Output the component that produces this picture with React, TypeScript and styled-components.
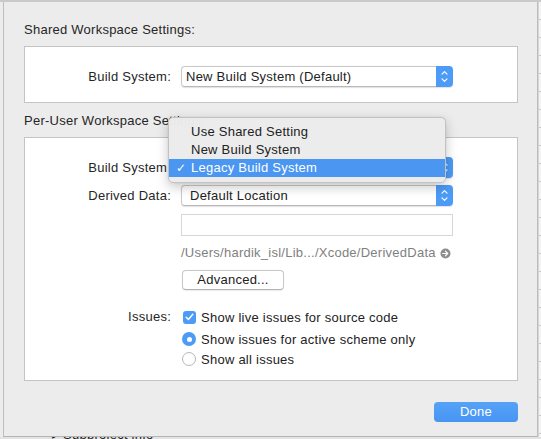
import React from "react";
import styled, { createGlobalStyle } from "styled-components";

const Global = createGlobalStyle`
  html, body { margin: 0; padding: 0; background: #e4e4e4; }
  #root { width: 541px; height: 439px; overflow: hidden; }
  * { box-sizing: border-box; }
`;

const BLUE = "#4c9bf6";
const FONT = `"Liberation Sans", Arial, sans-serif`;

const Screen = styled.div`
  width: 541px;
  height: 439px;
  display: grid;
  grid-template-rows: 2px 435px 2px;
  font-family: ${FONT};
  font-size: 13px;
  letter-spacing: 0.25px;
  color: #222;
  overflow: hidden;
`;

const TopEdge = styled.div`
  background: #c9c9c9;
`;

const Middle = styled.div`
  display: flex;
  align-items: stretch;
  height: 435px;
  overflow: hidden;
`;

const SideBackdrop = styled.div<{ $w: number }>`
  width: ${(p) => p.$w}px;
  flex: none;
  background: #ececec;
`;

const RightBackdrop = styled.div`
  flex: 1;
  background: repeating-linear-gradient(
    to bottom,
    #f3f3f3 0px,
    #f3f3f3 17px,
    #c9c9c9 17px,
    #c9c9c9 18px
  );
  border-left: 1px solid #d6d6d6;
`;

const BottomBackdrop = styled.div`
  height: 2px;
  background: #e3e3e3;
  overflow: hidden;
`;

const BehindText = styled.div`
  padding-left: 52px;
  line-height: 13px;
  height: 13px;
  transform: translateY(-9px);
  font-size: 13px;
  color: #222;
  white-space: nowrap;
`;

const Sheet = styled.div`
  position: relative;
  width: 535px;
  height: 435px;
  flex: none;
  background: #ececec;
  border-left: 1px solid #bdbdbd;
  border-right: 1px solid #bdbdbd;
  border-bottom: 1px solid #b4b4b4;
  padding: 20px 19px 0 20px;
  display: flex;
  flex-direction: column;
`;

const SectionTitle = styled.div<{ $mt: number }>`
  margin-top: ${(p) => p.$mt}px;
  line-height: 16px;
  height: 16px;
  color: #262626;
`;

const GroupBox = styled.div<{ $pt: number; $pb: number }>`
  margin-top: 8px;
  background: #ffffff;
  border: 1px solid #c4c4c4;
  padding: ${(p) => p.$pt}px 0 ${(p) => p.$pb}px 0;
  display: flex;
  flex-direction: column;
`;

const FormRow = styled.div<{ $mt?: number }>`
  display: grid;
  grid-template-columns: 146px 1fr;
  column-gap: 10px;
  align-items: center;
  margin-top: ${(p) => p.$mt ?? 0}px;
`;

const Label = styled.div<{ $lh?: number }>`
  text-align: right;
  line-height: ${(p) => p.$lh ?? 16}px;
  color: #262626;
  white-space: nowrap;
`;

const TopLabel = styled(Label)`
  align-self: start;
`;

const Popup = styled.div`
  display: flex;
  width: 272px;
  height: 21px;
  border-radius: 4px;
  box-shadow: 0 0.5px 1px rgba(0, 0, 0, 0.12);
`;

const PopupValue = styled.div<{ $inset: number }>`
  flex: 1;
  border: 1px solid #c9c9c9;
  border-right: none;
  border-bottom-color: #b9b9b9;
  border-radius: 4px 0 0 4px;
  background: #fff;
  padding-left: ${(p) => p.$inset}px;
  line-height: 19px;
  color: #222;
  white-space: nowrap;
  overflow: hidden;
`;

const PopupArrows = styled.div`
  width: 17px;
  flex: none;
  background: ${BLUE};
  border-radius: 0 4px 4px 0;
  display: flex;
  align-items: center;
  justify-content: center;
`;

const TextField = styled.div`
  width: 272px;
  height: 22px;
  border: 1px solid #d6d6d6;
  background: #fff;
`;

const PathLine = styled.div`
  display: flex;
  align-items: center;
  gap: 4px;
  line-height: 16px;
  color: #7f7f7f;
  white-space: nowrap;
`;

const PushButton = styled.button`
  width: 102px;
  height: 20px;
  margin-left: 1px;
  padding: 0;
  border: 1px solid #c8c8c8;
  border-bottom-color: #b2b2b2;
  border-radius: 4px;
  background: #fff;
  font-family: ${FONT};
  font-size: 13px;
  letter-spacing: 0.25px;
  color: #222;
  line-height: 18px;
  box-shadow: 0 0.5px 1px rgba(0, 0, 0, 0.08);
`;

const OptionList = styled.div`
  display: flex;
  flex-direction: column;
`;

const Option = styled.div<{ $mb?: number }>`
  display: flex;
  align-items: center;
  gap: 5px;
  height: 20px;
  margin-bottom: ${(p) => p.$mb ?? 0}px;
  color: #222;
  white-space: nowrap;
`;

const CheckBox = styled.div`
  width: 13px;
  height: 13px;
  margin-left: 2px;
  border-radius: 3px;
  background: ${BLUE};
  display: flex;
  align-items: center;
  justify-content: center;
`;

const Radio = styled.div<{ $on: boolean }>`
  width: 14px;
  height: 14px;
  margin-left: 1px;
  border-radius: 50%;
  background: ${(p) => (p.$on ? BLUE : "#fff")};
  border: ${(p) => (p.$on ? "none" : "1px solid #b7b7b7")};
  display: flex;
  align-items: center;
  justify-content: center;
  &::after {
    content: "";
    display: ${(p) => (p.$on ? "block" : "none")};
    width: 5px;
    height: 5px;
    border-radius: 50%;
    background: #fff;
  }
`;

const Footer = styled.div`
  margin-top: 21px;
  display: flex;
  justify-content: flex-end;
`;

const DefaultButton = styled.button`
  width: 84px;
  height: 20px;
  padding: 0;
  border: none;
  border-radius: 4px;
  background: linear-gradient(#55a2f7, #4795f3);
  color: #fff;
  font-family: ${FONT};
  font-size: 13px;
  letter-spacing: 0.25px;
  line-height: 20px;
`;

const Menu = styled.div`
  position: absolute;
  left: 164px;
  top: 115px;
  width: 278px;
  padding: 5px 0;
  background: rgba(236, 236, 236, 0.98);
  border: 0.5px solid #c2c2c2;
  border-radius: 5px;
  box-shadow: 0 4px 12px rgba(0, 0, 0, 0.22), 0 0 1px rgba(0, 0, 0, 0.2);
`;

const MenuItem = styled.div<{ $selected?: boolean }>`
  position: relative;
  height: 18px;
  line-height: 18px;
  padding-left: 22px;
  color: ${(p) => (p.$selected ? "#fff" : "#222")};
  background: ${(p) => (p.$selected ? "#4a96f1" : "transparent")};
  white-space: nowrap;
`;

const MenuCheck = styled.span`
  position: absolute;
  left: 7px;
  top: 0;
  font-family: "DejaVu Sans", sans-serif;
  font-size: 12px;
`;

const Chevrons = () => (
  <svg width="7" height="13" viewBox="0 0 7 13">
    <path d="M1 4.2 L3.5 1.7 L6 4.2" fill="none" stroke="#fff" strokeWidth="1.2" strokeLinecap="round" strokeLinejoin="round" />
    <path d="M1 8.8 L3.5 11.3 L6 8.8" fill="none" stroke="#fff" strokeWidth="1.2" strokeLinecap="round" strokeLinejoin="round" />
  </svg>
);

const CheckMark = () => (
  <svg width="9" height="8" viewBox="0 0 9 8">
    <path d="M1.2 4.2 L3.4 6.4 L7.8 1.2" fill="none" stroke="#fff" strokeWidth="1.5" strokeLinecap="round" strokeLinejoin="round" />
  </svg>
);

const RevealIcon = () => (
  <svg width="11" height="11" viewBox="0 0 11 11">
    <circle cx="5.5" cy="5.5" r="5" fill="#8d8d8d" />
    <path d="M2.6 5.5 H7.6 M5.4 3.2 L7.7 5.5 L5.4 7.8" fill="none" stroke="#fff" strokeWidth="1.2" strokeLinecap="round" strokeLinejoin="round" />
  </svg>
);

const PopupButton = ({ value, inset }: { value: string; inset: number }) => (
  <Popup>
    <PopupValue $inset={inset}>{value}</PopupValue>
    <PopupArrows>
      <Chevrons />
    </PopupArrows>
  </Popup>
);

export default function App() {
  return (
    <Screen>
      <Global />
      <TopEdge />
      <Middle>
        <SideBackdrop $w={3} />
        <Sheet>
          <SectionTitle $mt={0}>Shared Workspace Settings:</SectionTitle>
          <GroupBox $pt={19} $pb={15}>
            <FormRow>
              <Label>Build System:</Label>
              <PopupButton value="New Build System (Default)" inset={4} />
            </FormRow>
          </GroupBox>

          <SectionTitle $mt={10}>Per-User Workspace Settings:</SectionTitle>
          <GroupBox $pt={19} $pb={11}>
            <FormRow>
              <Label>Build System:</Label>
              <PopupButton value="Legacy Build System" inset={8} />
            </FormRow>
            <FormRow $mt={7}>
              <Label>Derived Data:</Label>
              <PopupButton value="Default Location" inset={8} />
            </FormRow>
            <FormRow $mt={8}>
              <span />
              <TextField />
            </FormRow>
            <FormRow $mt={9}>
              <span />
              <PathLine>
                /Users/hardik_isl/Lib.../Xcode/DerivedData
                <RevealIcon />
              </PathLine>
            </FormRow>
            <FormRow $mt={9}>
              <span />
              <div>
                <PushButton>Advanced...</PushButton>
              </div>
            </FormRow>
            <FormRow $mt={17}>
              <TopLabel $lh={20}>Issues:</TopLabel>
              <OptionList>
                <Option $mb={2}>
                  <CheckBox>
                    <CheckMark />
                  </CheckBox>
                  Show live issues for source code
                </Option>
                <Option>
                  <Radio $on />
                  Show issues for active scheme only
                </Option>
                <Option>
                  <Radio $on={false} />
                  Show all issues
                </Option>
              </OptionList>
            </FormRow>
          </GroupBox>

          <Footer>
            <DefaultButton>Done</DefaultButton>
          </Footer>

          <Menu>
            <MenuItem>Use Shared Setting</MenuItem>
            <MenuItem>New Build System</MenuItem>
            <MenuItem $selected>
              <MenuCheck>✓</MenuCheck>
              Legacy Build System
            </MenuItem>
          </Menu>
        </Sheet>
        <RightBackdrop />
      </Middle>
      <BottomBackdrop>
        <BehindText>▸ Subproject info</BehindText>
      </BottomBackdrop>
    </Screen>
  );
}
